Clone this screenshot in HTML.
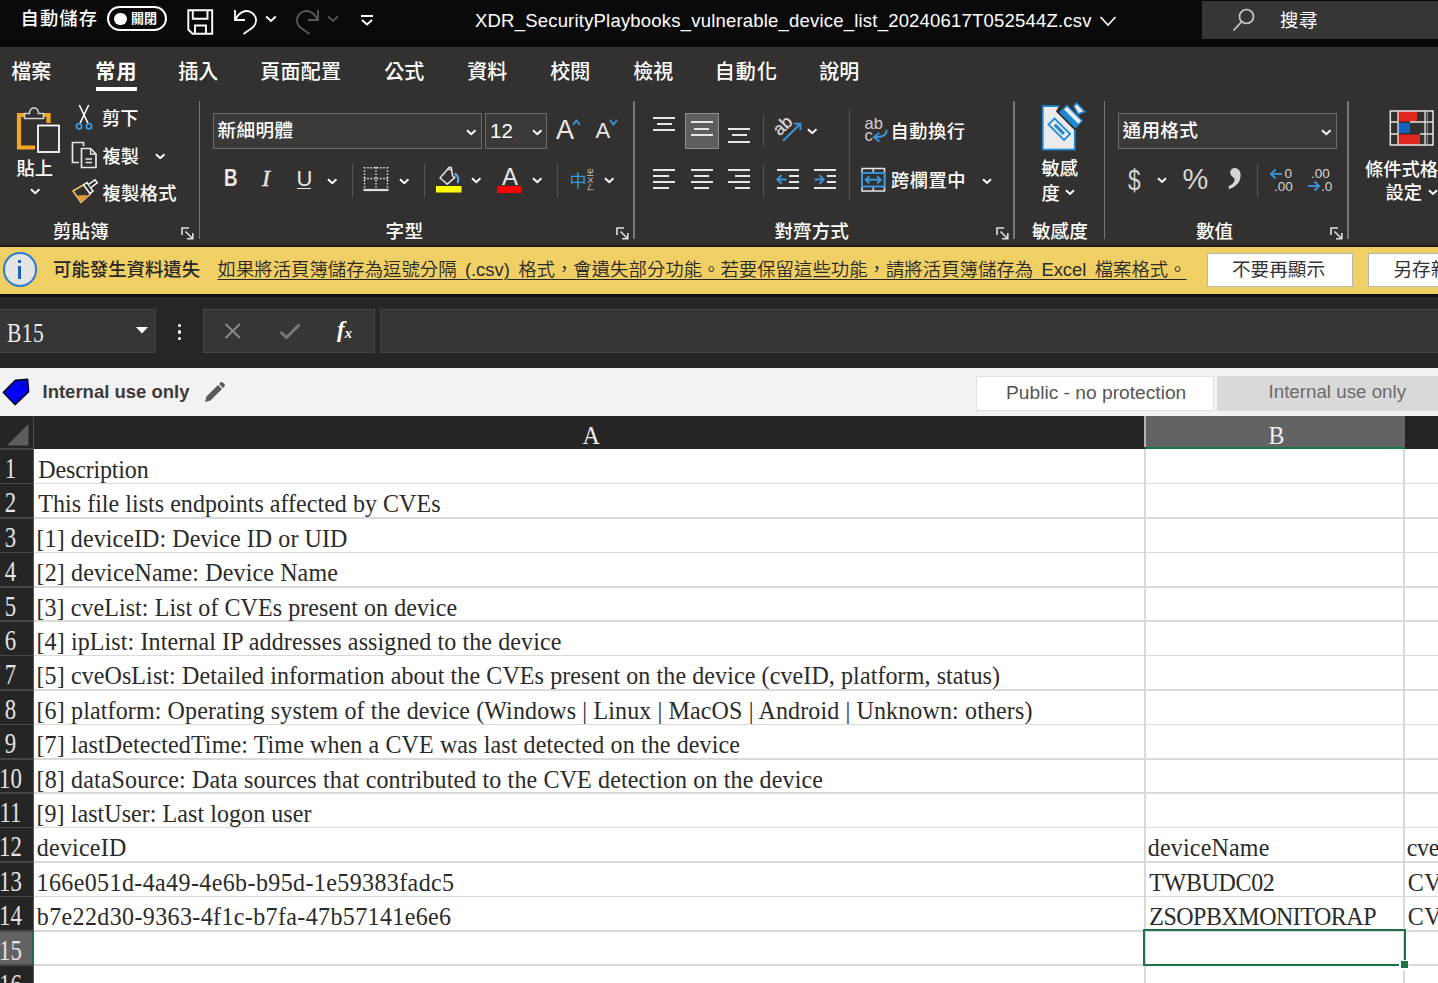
<!DOCTYPE html>
<html lang="zh-Hant">
<head>
<meta charset="utf-8">
<title>Excel</title>
<style>
*{box-sizing:border-box;margin:0;padding:0}
html,body{width:1438px;height:983px;overflow:hidden;background:#fff}
body{position:relative;font-family:"Liberation Sans","Noto Sans CJK TC",sans-serif;color:#fff}
.abs{position:absolute}
.t{position:absolute;white-space:nowrap;line-height:1}
#title{left:0;top:0;width:1438px;height:46.8px;background:#0a0a0a;z-index:2}
#tabs{left:0;top:46px;width:1438px;height:50px;background:#323130}
#ribbon{left:0;top:96px;width:1438px;height:151px;background:#323130}
#msg{left:0;top:246.8px;width:1438px;height:46.8px;background:#f0d064;z-index:2}
#fbar{left:0;top:293px;width:1438px;height:75px;background:#262626}
#sens{left:0;top:368px;width:1438px;height:48px;background:#f2f2f2}
#colhdr{left:0;top:416px;width:1438px;height:33px;background:#252525}
#grid{left:0;top:449px;width:1438px;height:534px;background:#fff}
.ui{font-family:"Liberation Sans","Noto Sans CJK TC",sans-serif;font-weight:500}
.serif{font-family:"Liberation Serif","Noto Serif CJK TC","Noto Serif CJK SC",serif}
.hd{font-size:24px;color:#f0f0f0;margin-top:-1px;transform:scaleY(1.06);transform-origin:0 80%}
.rn{font-size:24px;color:#e4e4e4;text-align:center;transform:scale(.95,1.21);transform-origin:50% 83.75%}
.ct{font-size:24px;color:#2a2a2a;transform:scaleY(1.08);transform-origin:0 83.75%}
</style>
</head>
<body>
<div id="title" class="abs">
<span class="t ui" style="left:20.5px;top:9.6px;font-size:18.3px;letter-spacing:1.1px">自動儲存</span>
<div class="abs" style="left:107px;top:6px;width:60px;height:25px;border:2px solid #fff;border-radius:13px"></div>
<div class="abs" style="left:114px;top:12.5px;width:12.5px;height:12.5px;border-radius:50%;background:#fff"></div>
<span class="t ui" style="left:131px;top:12px;font-size:13px;font-weight:700">關閉</span>
<svg class="abs" style="left:186px;top:8px" width="28" height="28" viewBox="0 0 28 28" fill="none" stroke="#fff" stroke-width="1.9"><path d="M2.3 2.3H26.2V25.7H6.5L2.3 21.5Z"/><path d="M6.8 2.3V10.8H21.5V2.3"/><path d="M9 25.7V17.5H20V25.7"/></svg>
<svg class="abs" style="left:232px;top:7px" width="28" height="30" viewBox="0 0 28 30" fill="none" stroke="#fff" stroke-width="1.8"><path d="M3 3V13H13"/><path d="M3.5 12.5C7 5 14 2 19.5 5.5C26 10 25 17 20 21L11.5 27"/></svg>
<svg class="abs" style="left:265px;top:15px" width="12" height="8" viewBox="0 0 12 8" fill="none" stroke="#fff" stroke-width="2"><path d="M1.2 1.5L6 6L10.8 1.5"/></svg>
<svg class="abs" style="left:293px;top:7px" width="28" height="30" viewBox="0 0 28 30" fill="none" stroke="#5a5a5a" stroke-width="1.8"><path d="M25 3V13H15"/><path d="M24.5 12.5C21 5 14 2 8.5 5.5C2 10 3 17 8 21L16.5 27"/></svg>
<svg class="abs" style="left:327px;top:15px" width="12" height="8" viewBox="0 0 12 8" fill="none" stroke="#555" stroke-width="1.8"><path d="M1.2 1.5L6 6L10.8 1.5"/></svg>
<svg class="abs" style="left:360px;top:14px" width="14" height="13" viewBox="0 0 14 13" fill="none" stroke="#fff" stroke-width="2"><path d="M1 2H13"/><path d="M2 6L7 10.5L12 6"/></svg>
<span class="t ui" id="ttl" style="left:475px;top:12px;font-size:18.5px;letter-spacing:0.2px">XDR_SecurityPlaybooks_vulnerable_device_list_20240617T052544Z.csv</span>
<svg class="abs" style="left:1099px;top:15px" width="18" height="13" viewBox="0 0 18 13" fill="none" stroke="#fff" stroke-width="1.6"><path d="M1.5 2L9 10L16.5 2"/></svg>
<div class="abs" style="left:1202px;top:1px;width:236px;height:38px;background:#363636"></div>
<svg class="abs" style="left:1232px;top:7px" width="24" height="26" viewBox="0 0 24 26" fill="none" stroke="#c8c8c8" stroke-width="1.7"><circle cx="14.5" cy="9.5" r="7"/><path d="M9.7 14.7L1.5 23.5"/></svg>
<span class="t ui" style="left:1280px;top:12px;font-size:18.5px;font-weight:400;letter-spacing:.6px">搜尋</span>
</div>
<div id="tabs" class="abs">
<span class="t ui" style="left:11.3px;top:15.7px;font-size:20px;font-weight:500;letter-spacing:0px">檔案</span>
<span class="t ui" style="left:95.3px;top:15.7px;font-size:20px;font-weight:700;letter-spacing:1.2px">常用</span>
<span class="t ui" style="left:178.3px;top:15.7px;font-size:20px;font-weight:500;letter-spacing:0px">插入</span>
<span class="t ui" style="left:260.2px;top:15.7px;font-size:20px;font-weight:500;letter-spacing:0.3px">頁面配置</span>
<span class="t ui" style="left:384.2px;top:15.7px;font-size:20px;font-weight:500;letter-spacing:0px">公式</span>
<span class="t ui" style="left:467.2px;top:15.7px;font-size:20px;font-weight:500;letter-spacing:0px">資料</span>
<span class="t ui" style="left:550.2px;top:15.7px;font-size:20px;font-weight:500;letter-spacing:0px">校閱</span>
<span class="t ui" style="left:633.2px;top:15.7px;font-size:20px;font-weight:500;letter-spacing:0px">檢視</span>
<span class="t ui" style="left:714.7px;top:15.7px;font-size:20px;font-weight:500;letter-spacing:1.1px">自動化</span>
<span class="t ui" style="left:819.2px;top:15.7px;font-size:20px;font-weight:500;letter-spacing:0px">說明</span>
<div class="abs" style="left:95.5px;top:40.5px;width:41.5px;height:4px;background:#fff"></div>
</div>
<div id="ribbon" class="abs">
<svg class="abs" style="left:14px;top:8px" width="48" height="50" viewBox="0 0 48 50" fill="none">
<path d="M10.5 11H5V43.5H21" stroke="#f5a623" stroke-width="4.2"/><path d="M29 11H34.5V19" stroke="#f5a623" stroke-width="4.2"/>
<path d="M10.5 14.5V9.5H15.5C15.5 2 24.5 2 24.5 9.5H29.5V14.5Z" stroke="#cfcfcf" stroke-width="1.6" fill="#323130"/>
<rect x="24" y="21.5" width="21" height="26.5" stroke="#fff" stroke-width="1.8" fill="#323130"/></svg>
<span class="t ui" style="left:16.5px;top:63.9px;font-size:18.3px;">貼上</span>
<svg class="abs" style="left:29.5px;top:92px" width="10.5" height="6.5" viewBox="0 0 10.5 6.5" fill="none" stroke="#fff" stroke-width="2"><path d="M1 1.2L5.25 5.2L9.5 1.2"/></svg>
<svg class="abs" style="left:74px;top:8px" width="20" height="27" viewBox="0 0 20 27" fill="none">
<path d="M5.3 1L14.3 20" stroke="#fff" stroke-width="1.6"/><path d="M14.7 1L5.7 20" stroke="#fff" stroke-width="1.6"/>
<circle cx="5" cy="22.3" r="2.6" stroke="#3a96dd" stroke-width="1.8"/><circle cx="15" cy="22.3" r="2.6" stroke="#3a96dd" stroke-width="1.8"/></svg>
<span class="t ui" style="left:102px;top:13.9px;font-size:18.3px;">剪下</span>
<svg class="abs" style="left:70px;top:44px" width="30" height="30" viewBox="0 0 30 30" fill="none" stroke="#e6e6e6" stroke-width="1.7">
<path d="M9 22.5H2.5V2.5H13.5V6"/><path d="M11.5 8.5H20.5L26 14V27.5H11.5Z" fill="#323130"/><path d="M20.5 8.5V14H26" stroke-width="1.3"/><path d="M15.5 19H22M15.5 22.5H22" stroke-width="1.3"/></svg>
<span class="t ui" style="left:102.5px;top:51.9px;font-size:18.3px;">複製</span>
<svg class="abs" style="left:155px;top:56.5px" width="10.5" height="6.5" viewBox="0 0 10.5 6.5" fill="none" stroke="#fff" stroke-width="2"><path d="M1 1.2L5.25 5.2L9.5 1.2"/></svg>
<svg class="abs" style="left:71px;top:82px" width="28" height="26" viewBox="0 0 28 26" fill="none">
<path d="M2 13L13 6.5L19.5 16L10 24.5Z" fill="#323130" stroke="#f7c873" stroke-width="1.5"/><path d="M6.5 17.5L16.5 17L10 23.5Z" fill="#f0a030"/>
<path d="M12.5 7L16 4.5L22 13L19 15.5Z" fill="#323130" stroke="#fff" stroke-width="1.5"/><path d="M17.5 6.5L24 1.8L26.2 4.8L20 9.5" stroke="#fff" stroke-width="1.5" fill="#323130"/></svg>
<span class="t ui" style="left:102.5px;top:89.0px;font-size:18.3px;letter-spacing:.3px">複製格式</span>
<span class="t ui" style="left:53px;top:127.0px;font-size:18.6px;">剪貼簿</span>
<svg class="abs" style="left:181px;top:130.5px" width="13" height="13" viewBox="0 0 13 13" fill="none" stroke="#e0e0e0" stroke-width="1.6"><path d="M1 8V1H8"/><path d="M4.5 4.5L11.5 11.5"/><path d="M6 11.8H11.8V6"/></svg>
<div class="abs" style="left:198.5px;top:4.5px;width:1.5px;height:138px;background:#777"></div>
<div class="abs" style="left:212.5px;top:16.5px;width:269px;height:36px;border:1.5px solid #6d6c6b;background:#3b3a39"></div>
<span class="t ui" style="left:217.5px;top:26.0px;font-size:18.6px;letter-spacing:.4px">新細明體</span>
<svg class="abs" style="left:466px;top:33px" width="10.5" height="6.5" viewBox="0 0 10.5 6.5" fill="none" stroke="#fff" stroke-width="2"><path d="M1 1.2L5.25 5.2L9.5 1.2"/></svg>
<div class="abs" style="left:485px;top:16.5px;width:62px;height:36px;border:1.5px solid #6d6c6b;background:#3b3a39"></div>
<span class="t ui" style="left:490px;top:25.4px;font-size:20.5px;">12</span>
<svg class="abs" style="left:532px;top:33px" width="10.5" height="6.5" viewBox="0 0 10.5 6.5" fill="none" stroke="#fff" stroke-width="2"><path d="M1 1.2L5.25 5.2L9.5 1.2"/></svg>
<span class="t ui" style="left:556px;top:20.9px;font-size:27px;color:#e8e8e8">A</span>
<svg class="abs" style="left:572px;top:22.5px" width="9" height="7" viewBox="0 0 9 7" fill="none" stroke="#3a96dd" stroke-width="1.8"><path d="M1 6L4.5 1.5L8 6"/></svg>
<span class="t ui" style="left:595.5px;top:24.2px;font-size:22px;color:#e8e8e8">A</span>
<svg class="abs" style="left:609px;top:22.5px" width="9" height="7" viewBox="0 0 9 7" fill="none" stroke="#3a96dd" stroke-width="1.8"><path d="M1 1L4.5 5.5L8 1"/></svg>
<span class="t ui" style="left:224px;top:70.7px;font-size:23.5px;font-weight:700;color:#e8e8e8;transform:scaleX(.8);transform-origin:0 0">B</span>
<span class="t serif" style="left:262px;top:70.20000000000002px;font-size:24px;font-style:italic;color:#e8e8e8;-webkit-text-stroke:.3px #e8e8e8">I</span>
<span class="t ui" style="left:296.5px;top:72.4px;font-size:22px;color:#e8e8e8">U</span>
<div class="abs" style="left:297px;top:91.80000000000001px;width:14px;height:1.6px;background:#e8e8e8"></div>
<svg class="abs" style="left:326.5px;top:81.5px" width="10.5" height="6.5" viewBox="0 0 10.5 6.5" fill="none" stroke="#fff" stroke-width="2"><path d="M1 1.2L5.25 5.2L9.5 1.2"/></svg>
<div class="abs" style="left:351.7px;top:68px;width:1.3px;height:33px;background:#555"></div>
<svg class="abs" style="left:363px;top:70px" width="26" height="26" viewBox="0 0 26 26" fill="none" stroke="#e0e0e0">
<path d="M1 1.8H25M1.5 1V22.5M24.5 1V22.5M13 1V22.5M1 12.5H25" stroke-width="1.5" stroke-dasharray="1.6 1.6"/><path d="M0.5 24H25.5" stroke-width="2.2"/></svg>
<svg class="abs" style="left:398.5px;top:81.5px" width="10.5" height="6.5" viewBox="0 0 10.5 6.5" fill="none" stroke="#fff" stroke-width="2"><path d="M1 1.2L5.25 5.2L9.5 1.2"/></svg>
<div class="abs" style="left:424px;top:68px;width:1.3px;height:33px;background:#555"></div>
<svg class="abs" style="left:436px;top:69px" width="27" height="28" viewBox="0 0 27 28" fill="none">
<path d="M4 13L11.6 4.2C12.8 1.6 15.8 1.8 15.6 4.8L16.6 10.8L18.9 12.4L11.3 19.2Z" stroke="#e0e0e0" stroke-width="1.6" stroke-linejoin="round"/><path d="M11.8 4.2L15.8 5.2" stroke="#e0e0e0" stroke-width="1.2"/><path d="M18.6 8.6C22.3 10.5 23 14.5 21.5 18" stroke="#5aaef0" stroke-width="2.2"/>
<rect x="0" y="21" width="25.5" height="6.5" fill="#ffff00"/></svg>
<svg class="abs" style="left:470.8px;top:81px" width="10.5" height="6.5" viewBox="0 0 10.5 6.5" fill="none" stroke="#fff" stroke-width="2"><path d="M1 1.2L5.25 5.2L9.5 1.2"/></svg>
<span class="t ui" style="left:502px;top:69.4px;font-size:24px;color:#e8e8e8">A</span>
<div class="abs" style="left:497px;top:90px;width:25px;height:6.5px;background:#ff0000"></div>
<svg class="abs" style="left:531.5px;top:81px" width="10.5" height="6.5" viewBox="0 0 10.5 6.5" fill="none" stroke="#fff" stroke-width="2"><path d="M1 1.2L5.25 5.2L9.5 1.2"/></svg>
<div class="abs" style="left:556.8px;top:68px;width:1.3px;height:33px;background:#555"></div>
<span class="t ui" style="left:569.5px;top:76.6px;font-size:17px;color:#3a96dd;font-weight:400">中</span>
<span class="t ui" style="left:586.5px;top:73.4px;font-size:7.5px;color:#bdbdbd">ㄓ</span>
<span class="t ui" style="left:586.5px;top:80.9px;font-size:7.5px;color:#bdbdbd">ㄨ</span>
<span class="t ui" style="left:586.5px;top:88.4px;font-size:7.5px;color:#bdbdbd">ㄥ</span>
<svg class="abs" style="left:603.5px;top:81px" width="10.5" height="6.5" viewBox="0 0 10.5 6.5" fill="none" stroke="#fff" stroke-width="2"><path d="M1 1.2L5.25 5.2L9.5 1.2"/></svg>
<span class="t ui" style="left:385.5px;top:127.0px;font-size:18.6px;letter-spacing:.4px">字型</span>
<svg class="abs" style="left:615.5px;top:130.5px" width="13" height="13" viewBox="0 0 13 13" fill="none" stroke="#e0e0e0" stroke-width="1.6"><path d="M1 8V1H8"/><path d="M4.5 4.5L11.5 11.5"/><path d="M6 11.8H11.8V6"/></svg>
<div class="abs" style="left:633.3px;top:4.5px;width:1.5px;height:138px;background:#777"></div>
<div class="abs" style="left:653.2px;top:20.6px;width:22.1px;height:2px;background:#e6e6e6"></div><div class="abs" style="left:656.9px;top:27.0px;width:15.0px;height:2px;background:#e6e6e6"></div><div class="abs" style="left:653.2px;top:33.4px;width:22.1px;height:2px;background:#e6e6e6"></div>
<div class="abs" style="left:684.5px;top:16.5px;width:34.5px;height:36px;background:#5f5e5d;border:1.3px solid #8f8f8f"></div>
<div class="abs" style="left:690.8px;top:25.4px;width:22.1px;height:2px;background:#e6e6e6"></div><div class="abs" style="left:694.3px;top:31.8px;width:15.2px;height:2px;background:#e6e6e6"></div><div class="abs" style="left:690.8px;top:38.2px;width:22.1px;height:2px;background:#e6e6e6"></div>
<div class="abs" style="left:728px;top:31.8px;width:22.3px;height:2px;background:#e6e6e6"></div><div class="abs" style="left:731.5px;top:38.2px;width:15.3px;height:2px;background:#e6e6e6"></div><div class="abs" style="left:728px;top:44.6px;width:22.3px;height:2px;background:#e6e6e6"></div>
<div class="abs" style="left:763px;top:18.400000000000006px;width:1.3px;height:32.0px;background:#555"></div>
<svg class="abs" style="left:770px;top:16px" width="34" height="34" viewBox="0 0 34 34" fill="none">
<text x="0" y="0" transform="translate(9.8 24.6) rotate(-45)" font-family="Liberation Sans, sans-serif" font-size="17.5" fill="#d8d8d8" stroke="#d8d8d8" stroke-width=".35">ab</text>
<path d="M13 29L30 12" stroke="#3a96dd" stroke-width="1.9"/><path d="M24 11.6H30.4V18" stroke="#3a96dd" stroke-width="1.9"/></svg>
<svg class="abs" style="left:806.7px;top:31.700000000000003px" width="10.5" height="6.5" viewBox="0 0 10.5 6.5" fill="none" stroke="#fff" stroke-width="2"><path d="M1 1.2L5.25 5.2L9.5 1.2"/></svg>
<div class="abs" style="left:849px;top:13.599999999999994px;width:1.3px;height:91.20000000000002px;background:#555"></div>
<div class="abs" style="left:653.2px;top:72.6px;width:22.1px;height:2px;background:#e6e6e6"></div><div class="abs" style="left:653.2px;top:78.8px;width:15.7px;height:2px;background:#e6e6e6"></div><div class="abs" style="left:653.2px;top:85.0px;width:22.1px;height:2px;background:#e6e6e6"></div><div class="abs" style="left:653.2px;top:91.3px;width:15.7px;height:2px;background:#e6e6e6"></div>
<div class="abs" style="left:690.8px;top:72.6px;width:22.1px;height:2px;background:#e6e6e6"></div><div class="abs" style="left:694.3px;top:78.8px;width:15.2px;height:2px;background:#e6e6e6"></div><div class="abs" style="left:690.8px;top:85.0px;width:22.1px;height:2px;background:#e6e6e6"></div><div class="abs" style="left:694.3px;top:91.3px;width:15.2px;height:2px;background:#e6e6e6"></div>
<div class="abs" style="left:728px;top:72.6px;width:22.3px;height:2px;background:#e6e6e6"></div><div class="abs" style="left:734.8px;top:78.8px;width:15.5px;height:2px;background:#e6e6e6"></div><div class="abs" style="left:728px;top:85.0px;width:22.3px;height:2px;background:#e6e6e6"></div><div class="abs" style="left:734.8px;top:91.3px;width:15.5px;height:2px;background:#e6e6e6"></div>
<div class="abs" style="left:763px;top:68px;width:1.3px;height:32.80000000000001px;background:#555"></div>
<div class="abs" style="left:776.8px;top:72.6px;width:21.9px;height:2px;background:#e6e6e6"></div><div class="abs" style="left:789.2px;top:78.8px;width:9.5px;height:2px;background:#e6e6e6"></div><div class="abs" style="left:789.2px;top:85.0px;width:9.5px;height:2px;background:#e6e6e6"></div><div class="abs" style="left:776.8px;top:91.3px;width:21.9px;height:2px;background:#e6e6e6"></div>
<svg class="abs" style="left:776px;top:77.5px" width="11" height="11" viewBox="0 0 11 11" fill="none" stroke="#3a96dd" stroke-width="1.9"><path d="M10.5 5.5H1.5"/><path d="M5.5 1.2L1.3 5.5L5.5 9.8"/></svg>
<div class="abs" style="left:814.3px;top:72.6px;width:22.0px;height:2px;background:#e6e6e6"></div><div class="abs" style="left:827px;top:78.8px;width:9.3px;height:2px;background:#e6e6e6"></div><div class="abs" style="left:827px;top:85.0px;width:9.3px;height:2px;background:#e6e6e6"></div><div class="abs" style="left:814.3px;top:91.3px;width:22.0px;height:2px;background:#e6e6e6"></div>
<svg class="abs" style="left:813.5px;top:77.5px" width="11" height="11" viewBox="0 0 11 11" fill="none" stroke="#3a96dd" stroke-width="1.9"><path d="M0.5 5.5H9.5"/><path d="M5.5 1.2L9.7 5.5L5.5 9.8"/></svg>
<svg class="abs" style="left:863px;top:22px" width="26" height="26" viewBox="0 0 26 26" fill="none">
<text x="1.5" y="10.9" font-family="Liberation Sans, sans-serif" font-size="16.5" fill="#cfcfcf">ab</text><text x="1.5" y="22.5" font-family="Liberation Sans, sans-serif" font-size="16.5" fill="#cfcfcf">c</text>
<path d="M23.6 11.8C23.8 16.8 20 19.1 11.8 19.1" stroke="#3a96dd" stroke-width="1.9"/><path d="M16.3 14.9L11 19.1L16.3 23.5" stroke="#3a96dd" stroke-width="1.9"/></svg>
<span class="t ui" style="left:890.5px;top:26.7px;font-size:18.2px;letter-spacing:.6px">自動換行</span>
<svg class="abs" style="left:860px;top:70.5px" width="26" height="25" viewBox="0 0 26 25" fill="none">
<rect x="2" y="1.5" width="22.5" height="22.5" stroke="#e6e6e6" stroke-width="1.5"/><path d="M13.2 1.5V6M13.2 19.5V24" stroke="#e6e6e6" stroke-width="1.4"/>
<rect x="2" y="6" width="22.5" height="13.5" stroke="#3a96dd" stroke-width="1.9" fill="#323130"/><path d="M6 12.7H20.5" stroke="#3a96dd" stroke-width="2"/><path d="M9.3 9.2L5.8 12.7L9.3 16.2M17.2 9.2L20.7 12.7L17.2 16.2" stroke="#3a96dd" stroke-width="2"/></svg>
<span class="t ui" style="left:891px;top:76.0px;font-size:18.3px;letter-spacing:.5px">跨欄置中</span>
<svg class="abs" style="left:982px;top:81.5px" width="10" height="6.2" viewBox="0 0 10 6.2" fill="none" stroke="#fff" stroke-width="2"><path d="M1 1.2L5.0 4.9L9 1.2"/></svg>
<span class="t ui" style="left:774.5px;top:127.0px;font-size:18.6px;">對齊方式</span>
<svg class="abs" style="left:995.5px;top:130.5px" width="13" height="13" viewBox="0 0 13 13" fill="none" stroke="#e0e0e0" stroke-width="1.6"><path d="M1 8V1H8"/><path d="M4.5 4.5L11.5 11.5"/><path d="M6 11.8H11.8V6"/></svg>
<div class="abs" style="left:1013px;top:4.5px;width:1.5px;height:138px;background:#777"></div>
<svg class="abs" style="left:1038px;top:4px" width="52" height="52" viewBox="0 0 52 52" fill="none">
<path d="M4.8 6.1H21L17.9 11.6L36.8 30.5V49.7H4.8Z" fill="#ebebeb"/><path d="M21.5 6.1H4.8V49.7H36.8V30" stroke="#1e88d8" stroke-width="1.7"/>
<g transform="translate(21.3 29.25) rotate(45)"><rect x="-11" y="-4.3" width="22" height="8.6" fill="none" stroke="#1e88d8" stroke-width="1.8"/><rect x="-6.5" y="-1.5" width="13" height="3" fill="#1e88d8"/></g>
<g transform="translate(33.2 16.6) rotate(45)"><rect x="-11.5" y="-5.5" width="23" height="11" fill="#1e88d8"/><rect x="-10" y="-4" width="20" height="4" fill="#ececec"/></g>
<path d="M35.9 6.4L38.4 3L46.9 11.6L40.2 14Z" fill="#ececec" stroke="#1e88d8" stroke-width="1.6"/></svg>
<span class="t ui" style="left:1041.5px;top:64.0px;font-size:18.3px;">敏感</span>
<span class="t ui" style="left:1041.5px;top:88.6px;font-size:18.3px;">度</span>
<svg class="abs" style="left:1065px;top:93px" width="10" height="6.2" viewBox="0 0 10 6.2" fill="none" stroke="#fff" stroke-width="2"><path d="M1 1.2L5.0 4.9L9 1.2"/></svg>
<span class="t ui" style="left:1032px;top:127.0px;font-size:18.6px;">敏感度</span>
<div class="abs" style="left:1103.7px;top:4.5px;width:1.5px;height:138px;background:#777"></div>
<div class="abs" style="left:1117.5px;top:16.5px;width:219px;height:36px;border:1.5px solid #6d6c6b;background:#3b3a39"></div>
<span class="t ui" style="left:1122.5px;top:26.0px;font-size:18.6px;letter-spacing:.3px">通用格式</span>
<svg class="abs" style="left:1321px;top:33px" width="10.5" height="6.5" viewBox="0 0 10.5 6.5" fill="none" stroke="#fff" stroke-width="2"><path d="M1 1.2L5.25 5.2L9.5 1.2"/></svg>
<span class="t ui" style="left:1127.5px;top:69.1px;font-size:30px;color:#d6d6d6;transform:scaleX(.76);transform-origin:0 0">$</span>
<svg class="abs" style="left:1157px;top:81px" width="10" height="6.2" viewBox="0 0 10 6.2" fill="none" stroke="#fff" stroke-width="2"><path d="M1 1.2L5.0 4.9L9 1.2"/></svg>
<span class="t ui" style="left:1182.5px;top:69.4px;font-size:29px;color:#d6d6d6">%</span>
<span class="t serif" style="left:1227.5px;top:23.700000000000003px;font-size:70px;font-weight:700;color:#d6d6d6;transform:scaleX(.85);transform-origin:0 0">,</span>
<div class="abs" style="left:1256.5px;top:68px;width:1.3px;height:33px;background:#555"></div>
<svg class="abs" style="left:1269.3px;top:69.5px" width="28" height="27" viewBox="0 0 28 27" fill="none">
<path d="M2 8H13" stroke="#3a96dd" stroke-width="1.8"/><path d="M6.5 3.5L2 8L6.5 12.5" stroke="#3a96dd" stroke-width="1.8"/>
<text x="15.5" y="12" font-family="Liberation Sans, sans-serif" font-size="13.5" fill="#d6d6d6">0</text><text x="5" y="25" font-family="Liberation Sans, sans-serif" font-size="13.5" fill="#d6d6d6">.00</text></svg>
<svg class="abs" style="left:1306px;top:69.5px" width="28" height="27" viewBox="0 0 28 27" fill="none">
<text x="5" y="12" font-family="Liberation Sans, sans-serif" font-size="13.5" fill="#d6d6d6">.00</text><text x="15" y="25" font-family="Liberation Sans, sans-serif" font-size="13.5" fill="#d6d6d6">.0</text>
<path d="M2 20H13" stroke="#3a96dd" stroke-width="1.8"/><path d="M8.5 15.5L13 20L8.5 24.5" stroke="#3a96dd" stroke-width="1.8"/></svg>
<span class="t ui" style="left:1196px;top:127.0px;font-size:18.6px;">數值</span>
<svg class="abs" style="left:1330px;top:130.5px" width="13" height="13" viewBox="0 0 13 13" fill="none" stroke="#e0e0e0" stroke-width="1.6"><path d="M1 8V1H8"/><path d="M4.5 4.5L11.5 11.5"/><path d="M6 11.8H11.8V6"/></svg>
<div class="abs" style="left:1347.3px;top:4.5px;width:1.5px;height:138px;background:#777"></div>
<svg class="abs" style="left:1389px;top:14px" width="46" height="36" viewBox="0 0 46 36" fill="none">
<rect x="9" y="1" width="19" height="10.5" fill="#e0281e"/><rect x="9" y="13" width="12" height="10" fill="#1565c0"/><rect x="9" y="24.5" width="22" height="10.5" fill="#e0281e"/>
<path d="M1.3 1H44V35H1.3Z" stroke="#e6e6e6" stroke-width="1.5"/><path d="M1.3 12H9M28 12H44M1.3 24H9M31 24H44M21 12H44M9 1V35M36 1V35" stroke="#e6e6e6" stroke-width="1.3"/><path d="M38.3 1V35" stroke="#9a9a9a" stroke-width="1"/></svg>
<span class="t ui" style="left:1365px;top:65.4px;font-size:18.3px;">條件式格式</span>
<span class="t ui" style="left:1385.5px;top:88.4px;font-size:18.3px;">設定</span>
<svg class="abs" style="left:1428px;top:93px" width="10" height="6.2" viewBox="0 0 10 6.2" fill="none" stroke="#fff" stroke-width="2"><path d="M1 1.2L5.0 4.9L9 1.2"/></svg>
<div class="abs" style="left:0;top:148.7px;width:1438px;height:2.3px;background:#1b1b1d"></div>
</div>
<div id="msg" class="abs">
<div class="abs" style="left:2.5px;top:5.5px;width:34.5px;height:34.5px;border-radius:50%;background:#e4e4e4;border:2px solid #2b7cd3"></div>
<div class="abs" style="left:18.3px;top:13px;width:3px;height:3.2px;background:#1565c0"></div>
<div class="abs" style="left:18.3px;top:19px;width:3px;height:13.5px;background:#1565c0"></div>
<span class="t ui" id="m1" style="left:53px;top:14px;font-size:18.4px;font-weight:500;color:#262626">可能發生資料遺失</span>
<span class="t ui" id="m2" style="left:217.5px;top:14px;font-size:18.4px;font-weight:350;color:#2a2a2a;text-decoration:underline;text-underline-offset:3px;text-decoration-thickness:1.3px;word-spacing:3.2px">如果將活頁簿儲存為逗號分隔 (.csv) 格式，會遺失部分功能。若要保留這些功能，請將活頁簿儲存為 Excel 檔案格式。</span>
<div class="abs" style="left:1206.8px;top:6.2px;width:146.6px;height:33.8px;background:#fff;border:1.5px solid #b4b4ba"></div>
<span class="t ui" id="m3" style="left:1232px;top:14px;font-size:18.6px;font-weight:400;color:#333">不要再顯示</span>
<div class="abs" style="left:1367.7px;top:6.2px;width:90px;height:33.8px;background:#fff;border:1.5px solid #b4b4ba"></div>
<span class="t ui" style="left:1393.5px;top:14px;font-size:18.6px;font-weight:400;color:#333">另存新檔...</span>
</div>
<div id="fbar" class="abs">
<div class="abs" style="left:0;top:0;width:1438px;height:3.6px;background:#101114"></div>
<div class="abs" style="left:-2px;top:16px;width:158px;height:43.6px;background:#363636;border:1.3px solid #454545"></div>
<span class="t serif" id="nb" style="left:7px;top:28.5px;font-size:24px;color:#ececec;letter-spacing:0.5px;transform:scale(.9,1.12);transform-origin:0 83.75%">B15</span>
<svg class="abs" style="left:135.5px;top:33.5px" width="12" height="7" viewBox="0 0 12 7"><path d="M0 0H12L6 6.5Z" fill="#fff"/></svg>
<div class="abs" style="left:177.5px;top:30.5px;width:3.6px;height:3.6px;border-radius:50%;background:#fff"></div>
<div class="abs" style="left:177.5px;top:37px;width:3.6px;height:3.6px;border-radius:50%;background:#fff"></div>
<div class="abs" style="left:177.5px;top:43.5px;width:3.6px;height:3.6px;border-radius:50%;background:#fff"></div>
<div class="abs" style="left:203px;top:16px;width:171.5px;height:43.6px;background:#363636;border:1.3px solid #454545"></div>
<svg class="abs" style="left:224px;top:30.2px" width="18" height="16" viewBox="0 0 18 16" fill="none" stroke="#8a8a8a" stroke-width="2"><path d="M1.5 1L16 15M16 1L1.5 15"/></svg>
<svg class="abs" style="left:279px;top:29.7px" width="22" height="17" viewBox="0 0 22 17" fill="none" stroke="#7a7a7a" stroke-width="3"><path d="M1.5 9L7.5 14.5L20.5 1.5"/></svg>
<span class="t serif" style="left:337px;top:25px;font-size:23px;font-style:italic;font-weight:700;color:#fff">f<span style="font-size:14.5px;position:relative;top:0.5px;left:0px;letter-spacing:0">x</span></span>
<div class="abs" style="left:379.5px;top:16px;width:1062px;height:43.6px;background:#363636;border:1.3px solid #454545"></div>
</div>
<div id="sens" class="abs">
<svg class="abs" style="left:2px;top:10px" width="28" height="28" viewBox="0 0 28 28"><path d="M13.5 2.5L25.5 1.5L26.5 13.5L13 26.5L1.5 14.5Z" fill="#0000ff" stroke="#06062e" stroke-width="1.8" stroke-linejoin="round"/><circle cx="21" cy="6.5" r="1.5" fill="#0a0a5a"/></svg>
<span class="t" id="s1" style="left:42.5px;top:14.5px;font-size:18.5px;font-weight:700;color:#3b3a39;letter-spacing:0px">Internal use only</span>
<svg class="abs" style="left:203px;top:14px" width="22" height="22" viewBox="0 0 22 22"><path d="M2 20L3.5 14.5L15 3L19 7L7.5 18.5Z" fill="#5a5a5a"/><path d="M16 2L17.5 0.5C18.3 -0.2 19.3 0 20 0.7L21.3 2C22 2.7 22 3.7 21.5 4.5L20 6Z" fill="#5a5a5a"/></svg>
<div class="abs" style="left:976px;top:7.5px;width:238px;height:35px;background:#fff;border:1.3px solid #e1e1e1"></div>
<span class="t" id="s2" style="left:1006px;top:14.5px;font-size:19.2px;color:#555">Public - no protection</span>
<div class="abs" style="left:1217px;top:7.5px;width:230px;height:35px;background:#d9d9d9"></div>
<span class="t" id="s3" style="left:1268.5px;top:14.5px;font-size:18.75px;color:#6b6b6b">Internal use only</span>
</div>
<div id="colhdr" class="abs">
<svg class="abs" style="left:6px;top:7px" width="24" height="24" viewBox="0 0 24 24"><path d="M22.5 1V22.5H1Z" fill="#5e5e5e"/></svg>
<div class="abs" style="left:33px;top:1px;width:1.3px;height:33px;background:#4d4d4d"></div>
<span class="t serif hd" style="left:582.5px;top:8.5px;">A</span>
<div class="abs" style="left:1144.5px;top:0;width:260px;height:33px;background:#636363"></div>
<div class="abs" style="left:1144.3px;top:0;width:1.3px;height:31px;background:#b5b5b5"></div>
<div class="abs" style="left:1144.5px;top:30.5px;width:260px;height:3.2px;background:#107c41"></div>
<span class="t serif hd" style="left:1268.5px;top:8.5px;">B</span>
</div>
<div id="grid" class="abs">
<div class="abs" style="left:0;top:0;width:33px;height:534px;background:#252525"></div>
<div class="abs" style="left:33px;top:0;width:1.2px;height:534px;background:#555"></div>
<div class="abs" style="left:0;top:481.90px;width:33px;height:34.40px;background:#636363"></div>
<div class="abs" style="left:32px;top:481.90px;width:2.2px;height:34.40px;background:#1e7145"></div>
<div class="abs" style="left:0;top:-0.60px;width:33px;height:1.5px;background:#464646"></div>
<div class="abs" style="left:0;top:33.80px;width:33px;height:1.5px;background:#464646"></div>
<div class="abs" style="left:34px;top:33.80px;width:1404px;height:1.7px;background:#dadada"></div>
<div class="abs" style="left:0;top:68.20px;width:33px;height:1.5px;background:#464646"></div>
<div class="abs" style="left:34px;top:68.20px;width:1404px;height:1.7px;background:#dadada"></div>
<div class="abs" style="left:0;top:102.60px;width:33px;height:1.5px;background:#464646"></div>
<div class="abs" style="left:34px;top:102.60px;width:1404px;height:1.7px;background:#dadada"></div>
<div class="abs" style="left:0;top:137.00px;width:33px;height:1.5px;background:#464646"></div>
<div class="abs" style="left:34px;top:137.00px;width:1404px;height:1.7px;background:#dadada"></div>
<div class="abs" style="left:0;top:171.40px;width:33px;height:1.5px;background:#464646"></div>
<div class="abs" style="left:34px;top:171.40px;width:1404px;height:1.7px;background:#dadada"></div>
<div class="abs" style="left:0;top:205.80px;width:33px;height:1.5px;background:#464646"></div>
<div class="abs" style="left:34px;top:205.80px;width:1404px;height:1.7px;background:#dadada"></div>
<div class="abs" style="left:0;top:240.20px;width:33px;height:1.5px;background:#464646"></div>
<div class="abs" style="left:34px;top:240.20px;width:1404px;height:1.7px;background:#dadada"></div>
<div class="abs" style="left:0;top:274.60px;width:33px;height:1.5px;background:#464646"></div>
<div class="abs" style="left:34px;top:274.60px;width:1404px;height:1.7px;background:#dadada"></div>
<div class="abs" style="left:0;top:309.00px;width:33px;height:1.5px;background:#464646"></div>
<div class="abs" style="left:34px;top:309.00px;width:1404px;height:1.7px;background:#dadada"></div>
<div class="abs" style="left:0;top:343.40px;width:33px;height:1.5px;background:#464646"></div>
<div class="abs" style="left:34px;top:343.40px;width:1404px;height:1.7px;background:#dadada"></div>
<div class="abs" style="left:0;top:377.80px;width:33px;height:1.5px;background:#464646"></div>
<div class="abs" style="left:34px;top:377.80px;width:1404px;height:1.7px;background:#dadada"></div>
<div class="abs" style="left:0;top:412.20px;width:33px;height:1.5px;background:#464646"></div>
<div class="abs" style="left:34px;top:412.20px;width:1404px;height:1.7px;background:#dadada"></div>
<div class="abs" style="left:0;top:446.60px;width:33px;height:1.5px;background:#464646"></div>
<div class="abs" style="left:34px;top:446.60px;width:1404px;height:1.7px;background:#dadada"></div>
<div class="abs" style="left:0;top:481.00px;width:33px;height:1.5px;background:#464646"></div>
<div class="abs" style="left:34px;top:481.00px;width:1404px;height:1.7px;background:#dadada"></div>
<div class="abs" style="left:0;top:515.40px;width:33px;height:1.5px;background:#464646"></div>
<div class="abs" style="left:34px;top:515.40px;width:1404px;height:1.7px;background:#dadada"></div>
<div class="abs" style="left:1144px;top:0;width:1.8px;height:534px;background:#d9d9d9"></div>
<div class="abs" style="left:1403.4px;top:0;width:1.8px;height:534px;background:#d9d9d9"></div>
<span class="t serif rn" style="left:-2px;width:25px;top:9.00px">1</span>
<span class="t serif rn" style="left:-2px;width:25px;top:43.40px">2</span>
<span class="t serif rn" style="left:-2px;width:25px;top:77.80px">3</span>
<span class="t serif rn" style="left:-2px;width:25px;top:112.20px">4</span>
<span class="t serif rn" style="left:-2px;width:25px;top:146.60px">5</span>
<span class="t serif rn" style="left:-2px;width:25px;top:181.00px">6</span>
<span class="t serif rn" style="left:-2px;width:25px;top:215.40px">7</span>
<span class="t serif rn" style="left:-2px;width:25px;top:249.80px">8</span>
<span class="t serif rn" style="left:-2px;width:25px;top:284.20px">9</span>
<span class="t serif rn" style="left:-2px;width:25px;top:318.60px">10</span>
<span class="t serif rn" style="left:-2px;width:25px;top:353.00px">11</span>
<span class="t serif rn" style="left:-2px;width:25px;top:387.40px">12</span>
<span class="t serif rn" style="left:-2px;width:25px;top:421.80px">13</span>
<span class="t serif rn" style="left:-2px;width:25px;top:456.20px">14</span>
<span class="t serif rn" style="left:-2px;width:25px;top:490.60px">15</span>
<span class="t serif rn" style="left:-2px;width:25px;top:525.00px">16</span>
<span class="t serif ct" id="c0" style="left:38.3px;top:9.00px;letter-spacing:-0.162px">Description</span>
<span class="t serif ct" id="c1" style="left:38.3px;top:43.40px;letter-spacing:0.033px">This file lists endpoints affected by CVEs</span>
<span class="t serif ct" id="c2" style="left:36.5px;top:77.80px;letter-spacing:0.082px">[1] deviceID: Device ID or UID</span>
<span class="t serif ct" id="c3" style="left:36.5px;top:112.20px;letter-spacing:0.135px">[2] deviceName: Device Name</span>
<span class="t serif ct" id="c4" style="left:36.5px;top:146.60px;letter-spacing:0.066px">[3] cveList: List of CVEs present on device</span>
<span class="t serif ct" id="c5" style="left:36.5px;top:181.00px;letter-spacing:0.108px">[4] ipList: Internal IP addresses assigned to the device</span>
<span class="t serif ct" id="c6" style="left:36.5px;top:215.40px;letter-spacing:0.100px">[5] cveOsList: Detailed information about the CVEs present on the device (cveID, platform, status)</span>
<span class="t serif ct" id="c7" style="left:36.5px;top:249.80px;letter-spacing:0.129px">[6] platform: Operating system of the device (Windows | Linux | MacOS | Android | Unknown: others)</span>
<span class="t serif ct" id="c8" style="left:36.5px;top:284.20px;letter-spacing:0.114px">[7] lastDetectedTime: Time when a CVE was last detected on the device</span>
<span class="t serif ct" id="c9" style="left:36.5px;top:318.60px;letter-spacing:0.135px">[8] dataSource: Data sources that contributed to the CVE detection on the device</span>
<span class="t serif ct" id="c10" style="left:36.5px;top:353.00px;letter-spacing:0.059px">[9] lastUser: Last logon user</span>
<span class="t serif ct" id="c11" style="left:36.8px;top:387.40px;letter-spacing:0.218px">deviceID</span>
<span class="t serif ct" id="c12" style="left:36.5px;top:421.80px;letter-spacing:0.392px">166e051d-4a49-4e6b-b95d-1e59383fadc5</span>
<span class="t serif ct" id="c13" style="left:36.8px;top:456.20px;letter-spacing:0.374px">b7e22d30-9363-4f1c-b7fa-47b57141e6e6</span>
<span class="t serif ct" id="c14" style="left:1147.8px;top:387.40px;letter-spacing:0.176px">deviceName</span>
<span class="t serif ct" id="c15" style="left:1149.3px;top:421.80px;letter-spacing:-0.350px">TWBUDC02</span>
<span class="t serif ct" id="c16" style="left:1149.3px;top:456.20px;letter-spacing:-0.505px">ZSOPBXMONITORAP</span>
<span class="t serif ct" id="c17" style="left:1406.8px;top:387.40px;letter-spacing:-0.350px">cveList</span>
<span class="t serif ct" id="c18" style="left:1407.8px;top:421.80px;letter-spacing:0.374px">CVE-2023-36884</span>
<span class="t serif ct" id="c19" style="left:1407.8px;top:456.20px;letter-spacing:0.374px">CVE-2023-36884</span>
<div class="abs" style="left:1142.6px;top:479.8px;width:263.5px;height:37.6px;border:2.8px solid #1e7145"></div>
<div class="abs" style="left:1399.3px;top:510.8px;width:10px;height:10px;background:#fff"></div>
<div class="abs" style="left:1400.6px;top:512.1px;width:7.6px;height:7.4px;background:#1e7145"></div>
</div>
</body>
</html>
